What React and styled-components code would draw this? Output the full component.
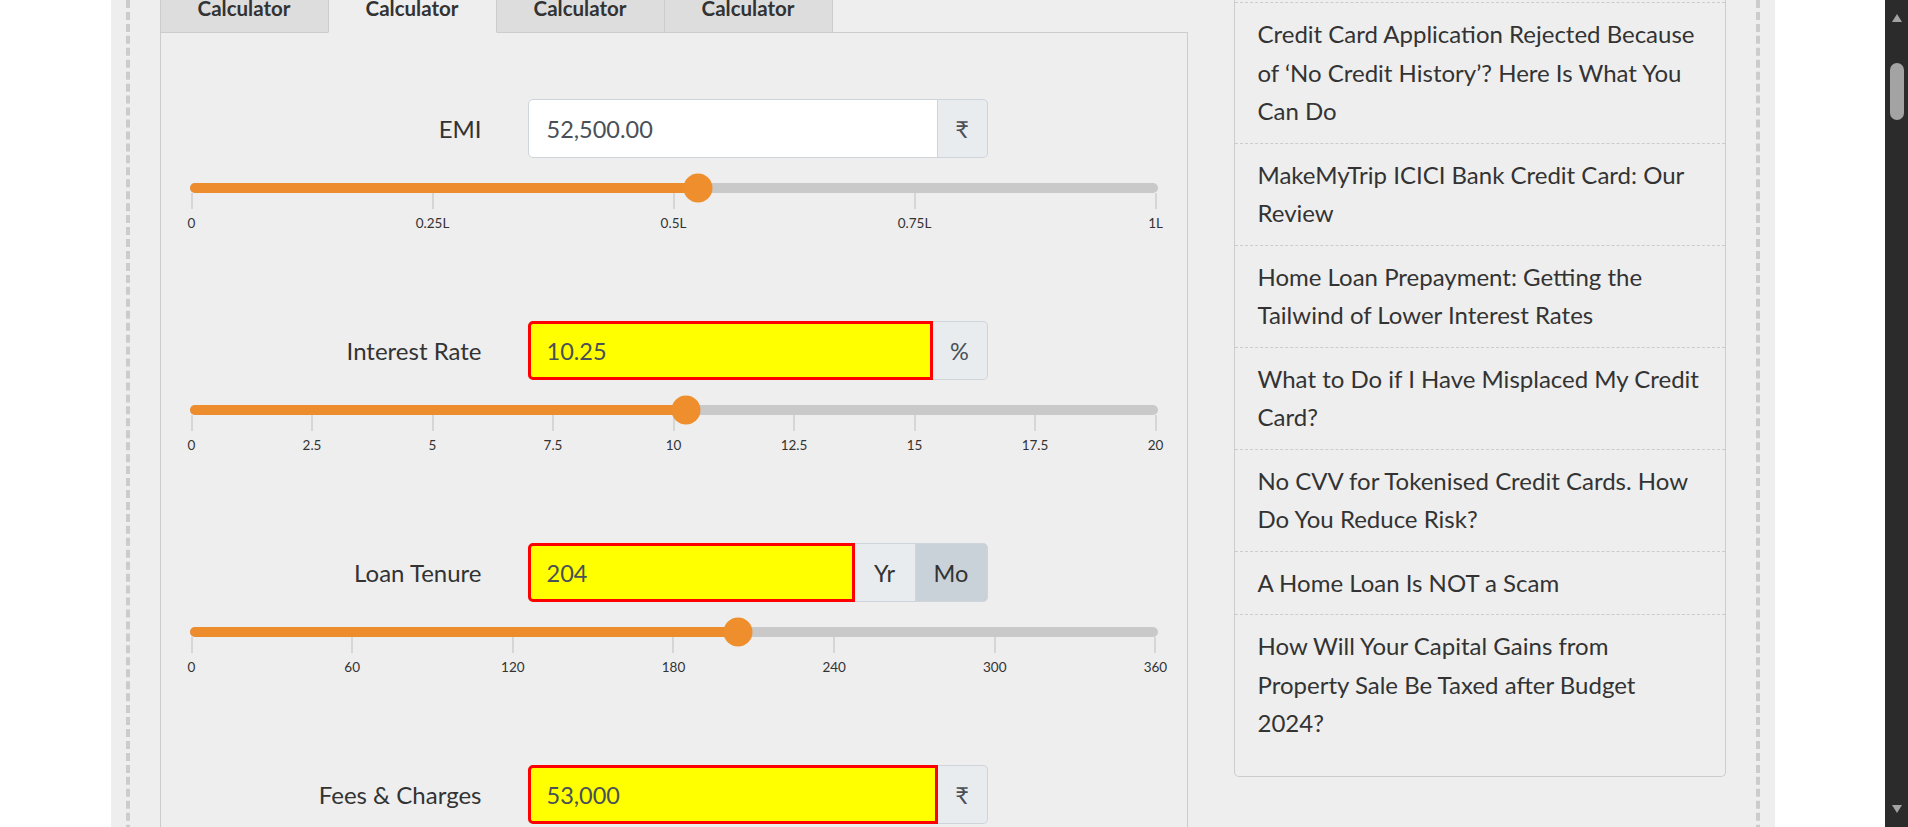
import React from "react";
import styled, { createGlobalStyle } from "styled-components";

const GlobalStyle = createGlobalStyle`
  html, body {
    margin: 0;
    padding: 0;
    height: 100%;
    overflow: hidden;
    background: #fff;
  }
  body {
    font-family: Lato, "Noto Sans", sans-serif;
    color: #333;
  }
  * {
    box-sizing: border-box;
  }
`;

const Screen = styled.div`
  display: flex;
  height: 827px;
  overflow: hidden;
`;

const Viewport = styled.div`
  flex: 1;
  min-width: 0;
  overflow: hidden;
`;

const Page = styled.div`
  width: 1664px;
  min-height: 827px;
  margin: 0 auto;
  padding: 0 15px;
  background: #eee;
`;

const Frame = styled.div`
  min-height: 827px;
  border-left: 4px dashed #ccc;
  border-right: 4px dashed #ccc;
  padding: 0 30px;
  display: grid;
  grid-template-columns: 1028px 492px;
  column-gap: 46px;
  align-items: start;
`;

const Main = styled.div`
  display: flex;
  flex-direction: column;
`;

const TabBar = styled.div`
  display: flex;
  border-bottom: 1px solid #ccc;
`;

const Tab = styled.div`
  width: 169px;
  height: 33px;
  margin-bottom: -1px;
  margin-left: ${p => (p.first ? "0" : "-1px")};
  border: 1px solid #ccc;
  border-top: 0;
  border-bottom-color: ${p => (p.active ? "#eee" : "#ccc")};
  background: ${p => (p.active ? "#eee" : "#ddd")};
  position: relative;
  z-index: ${p => (p.active ? 1 : 0)};
  font-size: 20.5px;
  font-weight: 700;
  line-height: 17px;
  text-align: center;
  color: #333;
`;

const Panel = styled.div`
  border: 1px solid #ccc;
  border-top: 0;
  min-height: 795px;
  padding: 66px 29px 0;
`;

const Row = styled.div`
  margin-bottom: 90px;
`;

const FieldRow = styled.div`
  display: grid;
  grid-template-columns: 292px 460px;
  column-gap: 46px;
  align-items: center;
`;

const Label = styled.label`
  text-align: right;
  font-size: 24px;
  color: #333;
`;

const InputGroup = styled.div`
  display: flex;
  height: 59px;
`;

const Field = styled.input`
  flex: 1;
  min-width: 0;
  height: 100%;
  margin: 0;
  border: ${p => (p.invalid ? "3px solid #ff0000" : "1px solid #ced4da")};
  border-radius: 5px 0 0 5px;
  padding: 0 0 0 ${p => (p.invalid ? "16px" : "18px")};
  background: ${p => (p.invalid ? "#ffff00" : "#fff")};
  font-family: Lato, "Noto Sans", sans-serif;
  font-size: 23.5px;
  color: #495057;
  outline: none;
`;

const Addon = styled.span`
  flex: 0 0 ${p => p.w}px;
  display: flex;
  align-items: center;
  justify-content: center;
  border: 1px solid #ced4da;
  border-left: 0;
  border-radius: ${p => (p.last ? "0 5px 5px 0" : "0")};
  background: ${p => (p.active ? "#c9d1d9" : "#e9ecef")};
  font-size: 23.5px;
  color: ${p => (p.symbol ? "#495057" : "#333")};
`;

const Slider = styled.div`
  margin-top: 25px;
  position: relative;
`;

const Track = styled.div`
  height: 10px;
  border-radius: 5px;
  background: #c9c9c9;
  overflow: hidden;
`;

const Fill = styled.div`
  height: 100%;
  background: #ed8c2d;
`;

const Handle = styled.div`
  position: absolute;
  top: 5px;
  width: 29px;
  height: 29px;
  border-radius: 50%;
  background: #ef8e2d;
  transform: translate(-50%, -50%);
`;

const Scale = styled.div`
  display: flex;
  justify-content: space-between;
  margin: 0 1px;
`;

const Tick = styled.div`
  width: 2px;
  display: flex;
  flex-direction: column;
  align-items: center;
`;

const TickLine = styled.span`
  width: 2px;
  height: 16px;
  background: #d6d6d6;
`;

const TickLabel = styled.span`
  margin-top: 6px;
  white-space: nowrap;
  font-size: 13.5px;
  line-height: 16px;
  color: #333;
`;

const Side = styled.aside`
  border: 1px solid #ccc;
  border-top: 0;
  border-radius: 0 0 5px 5px;
  padding: 2px 0 21px;
`;

const PostList = styled.ul`
  list-style: none;
  margin: 0;
  padding: 0;
`;

const Post = styled.li`
  border-top: 1px dashed #ccc;
  padding: 12px 23px;
  font-size: 24px;
  line-height: 38.5px;
  color: #333;
`;

const ScrollBar = styled.div`
  flex: 0 0 23px;
  background: #2b2b2b;
  display: flex;
  flex-direction: column;
  align-items: center;
`;

const Arrow = styled.div`
  height: 36px;
  width: 100%;
  display: flex;
  align-items: center;
  justify-content: center;
`;

const Thumb = styled.div`
  width: 14px;
  height: 57px;
  margin-top: 27px;
  border-radius: 7px;
  background: #a3a3a3;
`;

const Spacer = styled.div`
  flex: 1;
`;

const fields = [
  {
    label: "EMI",
    value: "52,500.00",
    invalid: false,
    addons: [{ text: "₹", w: 50, symbol: true }],
    frac: 52500 / 100000,
    ticks: ["0", "0.25L", "0.5L", "0.75L", "1L"]
  },
  {
    label: "Interest Rate",
    value: "10.25",
    invalid: true,
    addons: [{ text: "%", w: 55, symbol: true }],
    frac: 10.25 / 20,
    ticks: ["0", "2.5", "5", "7.5", "10", "12.5", "15", "17.5", "20"]
  },
  {
    label: "Loan Tenure",
    value: "204",
    invalid: true,
    addons: [
      { text: "Yr", w: 61 },
      { text: "Mo", w: 72, active: true }
    ],
    frac: 204 / 360,
    ticks: ["0", "60", "120", "180", "240", "300", "360"]
  },
  {
    label: "Fees & Charges",
    value: "53,000",
    invalid: true,
    addons: [{ text: "₹", w: 50, symbol: true }],
    frac: 0.265,
    ticks: ["0", "0.5L", "1L", "1.5L", "2L"]
  }
];

// titles split where the sidebar column wraps them
const posts = [
  ["Credit Card Application Rejected Because", "of ‘No Credit History’? Here Is What You", "Can Do"],
  ["MakeMyTrip ICICI Bank Credit Card: Our", "Review"],
  ["Home Loan Prepayment: Getting the", "Tailwind of Lower Interest Rates"],
  ["What to Do if I Have Misplaced My Credit", "Card?"],
  ["No CVV for Tokenised Credit Cards. How", "Do You Reduce Risk?"],
  ["A Home Loan Is NOT a Scam"],
  ["How Will Your Capital Gains from", "Property Sale Be Taxed after Budget", "2024?"]
];

const CalcRow = ({ field }) => {
  const pos = `calc(${field.frac} * (100% - 2px) + 1px)`;
  return (
    <Row>
      <FieldRow>
        <Label>{field.label}</Label>
        <InputGroup>
          <Field readOnly value={field.value} invalid={field.invalid ? 1 : 0} />
          {field.addons.map((a, i) => (
            <Addon
              key={a.text}
              w={a.w}
              symbol={a.symbol ? 1 : 0}
              active={a.active ? 1 : 0}
              last={i === field.addons.length - 1 ? 1 : 0}
            >
              {a.text}
            </Addon>
          ))}
        </InputGroup>
      </FieldRow>
      <Slider>
        <Track>
          <Fill style={{ width: pos }} />
        </Track>
        <Handle style={{ left: pos }} />
        <Scale>
          {field.ticks.map(t => (
            <Tick key={t}>
              <TickLine />
              <TickLabel>{t}</TickLabel>
            </Tick>
          ))}
        </Scale>
      </Slider>
    </Row>
  );
};

export default function App() {
  return (
    <>
      <GlobalStyle />
      <Screen>
        <Viewport>
          <Page>
            <Frame>
              <Main>
                <TabBar>
                  {[0, 1, 2, 3].map(i => (
                    <Tab key={i} first={i === 0 ? 1 : 0} active={i === 1 ? 1 : 0}>
                      Calculator
                    </Tab>
                  ))}
                </TabBar>
                <Panel>
                  {fields.map(f => (
                    <CalcRow key={f.label} field={f} />
                  ))}
                </Panel>
              </Main>
              <Side>
                <PostList>
                  {posts.map(lines => (
                    <Post key={lines[0]}>
                      {lines.map((l, i) => (
                        <React.Fragment key={i}>
                          {i > 0 && <br />}
                          {l}
                        </React.Fragment>
                      ))}
                    </Post>
                  ))}
                </PostList>
              </Side>
            </Frame>
          </Page>
        </Viewport>
        <ScrollBar>
          <Arrow>
            <svg width="10" height="8" viewBox="0 0 10 8">
              <polygon points="5,0 10,8 0,8" fill="#a3a3a3" />
            </svg>
          </Arrow>
          <Thumb />
          <Spacer />
          <Arrow>
            <svg width="10" height="8" viewBox="0 0 10 8">
              <polygon points="0,0 10,0 5,8" fill="#a3a3a3" />
            </svg>
          </Arrow>
        </ScrollBar>
      </Screen>
    </>
  );
}
